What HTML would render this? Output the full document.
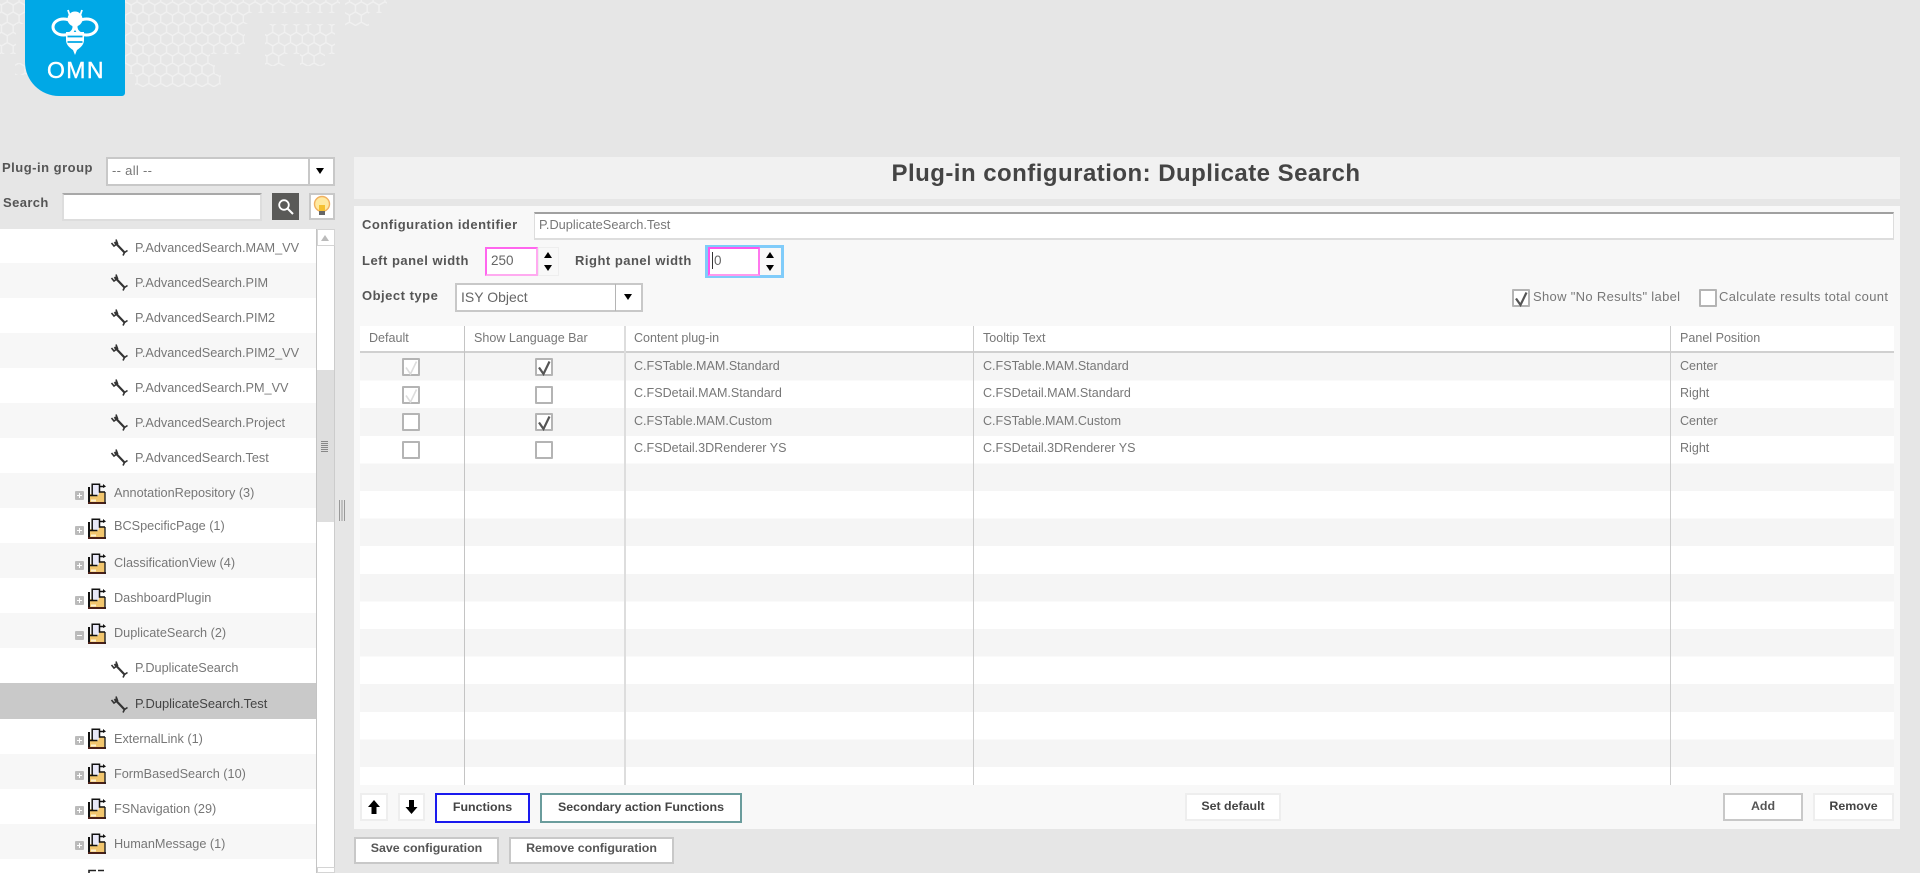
<!DOCTYPE html>
<html><head><meta charset="utf-8"><title>Plug-in configuration</title>
<style>
html,body{margin:0;padding:0;width:1920px;height:873px;overflow:hidden;background:#e6e6e6;font-family:"Liberation Sans",sans-serif;color:#777}
#r{position:absolute;left:0;top:0;width:1920px;height:873px;overflow:hidden;filter:blur(.35px)}
.a{position:absolute;box-sizing:border-box}
.t{position:absolute;white-space:nowrap;line-height:20px;font-size:12.55px;letter-spacing:0}
.t.n{font-size:12.7px}
.t.b{font-weight:bold;color:#555;font-size:13px;letter-spacing:.5px}
.btn{position:absolute;box-sizing:border-box;background:#fff;border:2px solid #eee;text-align:center;font-weight:bold;color:#444;font-size:12.4px;letter-spacing:0}
.cb{position:absolute;box-sizing:border-box;width:18px;height:18px;border:2px solid #b4b4b4;background:#fff;border-radius:1px}
svg{position:absolute;overflow:visible}
.tri{position:absolute;width:0;height:0;border-left:4.5px solid transparent;border-right:4.5px solid transparent}
.dn{border-top:6px solid #000}
.up{border-bottom:6px solid #000}
.p,.m{position:absolute;left:75px;width:9px;height:9px;border-radius:1px;background:#bbb}
.p:before,.m:before{content:"";position:absolute;left:2px;top:4px;width:5px;height:1px;background:#fff}
.p:after{content:"";position:absolute;left:4px;top:2px;width:1px;height:5px;background:#fff}
</style></head>
<body><div id="r">
<svg width="0" height="0" style="position:absolute">
<defs>
<pattern id="hx" x="1.4" y="1.7" width="11.8" height="20.4" patternUnits="userSpaceOnUse">
<path d="M0 3.4L5.9 0L11.8 3.4M0 3.4V10.2L5.9 13.6V20.4M11.8 3.4V10.2L5.9 13.6" fill="none" stroke="#f1f1f1" stroke-width="1.3"/>
</pattern>
<clipPath id="hc">
<rect x="0" y="0" width="340" height="13"/><rect x="345" y="0" width="42" height="13"/>
<rect x="0" y="13" width="250" height="11"/><rect x="345" y="13" width="24" height="13"/>
<rect x="0" y="24" width="16" height="30"/><rect x="125" y="24" width="120" height="30"/><rect x="265" y="24" width="70" height="30"/>
<rect x="125" y="54" width="85" height="10"/><rect x="265" y="54" width="20" height="12"/><rect x="300" y="54" width="25" height="12"/>
<rect x="15" y="63" width="12" height="12"/><rect x="125" y="64" width="90" height="10"/>
<rect x="135" y="74" width="86" height="13"/>
</clipPath>
<g id="w"><path d="M3.5 3L14 14" stroke="#333" stroke-width="2.2" fill="none"/><path d="M0.5 4L3 7L6.5 4.5L5 .5" stroke="#333" stroke-width="1.6" fill="none"/><path d="M16.5 11.5L13.5 13.5L12 16.5" stroke="#333" stroke-width="1.6" fill="none"/></g>
<g id="f"><path d="M2 11H6V13H10L11 9H16.5V19H2Z" fill="#f2c66e"/><path d="M4.5 1.5H11V11.5H4.5Z" fill="#e8e8f8"/><path d="M3 16.5H8V18.5H3Z" fill="#fff3d0"/><path d="M1 4V20" stroke="#111" stroke-width="2" fill="none"/><path d="M0 20H18" stroke="#4a2018" stroke-width="2" fill="none"/><path d="M17 20.5V9" stroke="#222" stroke-width="1.4" fill="none"/><path d="M4.2 12.5V1.2H11.5V9H17M11.5 3.5H15.5M2 12.5H9.5" stroke="#111" stroke-width="1.5" fill="none"/><path d="M15 1L18 3.5L15 5Z" fill="#111"/></g>
<g id="ck"><path d="M2 7.5L6.5 14L12.5 1.5" fill="none" stroke="#555" stroke-width="2.2"/></g>
<g id="ckd"><path d="M2 7.5L6.5 14L12.5 1.5" fill="none" stroke="#ddd" stroke-width="1.6"/></g>
</defs></svg>

<svg style="left:0;top:0" width="400" height="90"><rect width="400" height="90" fill="url(#hx)" clip-path="url(#hc)"/></svg>

<!-- logo -->
<div class="a" style="left:25px;top:0;width:100px;height:96px;background:#00a8e6;border-radius:0 0 3px 34px"></div>
<svg style="left:25px;top:0" width="100" height="96">
<g fill="none" stroke="#fff">
<ellipse cx="38.5" cy="27" rx="10.5" ry="8" stroke-width="3"/>
<ellipse cx="61.5" cy="27" rx="10.5" ry="8" stroke-width="3"/>
<path d="M45 16L43 10M55 16L57 10" stroke-width="1.8"/>
</g>
<circle cx="50" cy="19" r="7.5" fill="#fff"/>
<path d="M41 32H59V40C59 45 55 48 52 50L50 55L48 50C45 48 41 45 41 40Z" fill="#fff"/>
<path d="M42.5 36.5H57.5M42.5 42H57.5" stroke="#00a8e6" stroke-width="1.7"/>
</svg>
<div class="t" style="left:47px;top:59px;font-size:23px;letter-spacing:1.4px;color:#fff;line-height:22px;-webkit-text-stroke:.4px #fff">OMN</div>

<!-- left controls -->
<div class="t b" style="left:2px;top:158px">Plug-in group</div>
<div class="a" style="left:106px;top:157px;width:229px;height:29px;background:#fff;border:2px solid #c8c8c8"></div>
<div class="a" style="left:308px;top:158px;width:2px;height:27px;background:#c8c8c8"></div>
<div class="tri dn" style="left:316px;top:168px"></div>
<div class="t" style="left:112px;top:161px;font-size:13px;letter-spacing:.3px">-- all --</div>
<div class="t b" style="left:3px;top:193px;letter-spacing:.4px">Search</div>
<div class="a" style="left:62px;top:193px;width:200px;height:28px;background:#fff;border:2px solid #ddd;border-top-color:#a8a8a8"></div>
<div class="a" style="left:272px;top:193px;width:27px;height:27px;background:#5a5a58"></div>
<svg style="left:272px;top:193px" width="27" height="27"><circle cx="12" cy="12" r="4.8" fill="none" stroke="#fff" stroke-width="1.8"/><path d="M15.5 15.5L21 21" stroke="#fff" stroke-width="2"/></svg>
<div class="a" style="left:309px;top:193px;width:26px;height:27px;background:#fff;border:2px solid #c8c8c8"></div>
<svg style="left:309px;top:193px" width="26" height="27"><circle cx="13" cy="11" r="7.5" fill="#ffe9a0" stroke="#f0b060" stroke-width="1.4"/><path d="M10 12H16V19H10Z" fill="#f5c030"/><path d="M10 18H16V22H10Z" fill="#666"/></svg>

<!-- tree -->
<div class="a" style="left:0;top:229px;width:316px;height:644px;background:#fff;overflow:hidden">
<div class="a" style="left:0;top:34px;width:316px;height:35px;background:#f7f7f7"></div>
<div class="a" style="left:0;top:104px;width:316px;height:35px;background:#f7f7f7"></div>
<div class="a" style="left:0;top:174px;width:316px;height:35px;background:#f7f7f7"></div>
<div class="a" style="left:0;top:244px;width:316px;height:35px;background:#f7f7f7"></div>
<div class="a" style="left:0;top:314px;width:316px;height:35px;background:#f7f7f7"></div>
<div class="a" style="left:0;top:384px;width:316px;height:35px;background:#f7f7f7"></div>
<div class="a" style="left:0;top:454px;width:316px;height:36px;background:#c9c9c9"></div>
<div class="a" style="left:0;top:525px;width:316px;height:35px;background:#f7f7f7"></div>
<div class="a" style="left:0;top:595px;width:316px;height:35px;background:#f7f7f7"></div>
</div>

<svg style="left:111px;top:239px" width="17" height="17"><use href="#w"/></svg><div class="t n" style="left:135px;top:238px">P.AdvancedSearch.MAM_VV</div>
<svg style="left:111px;top:274px" width="17" height="17"><use href="#w"/></svg><div class="t n" style="left:135px;top:273px">P.AdvancedSearch.PIM</div>
<svg style="left:111px;top:309px" width="17" height="17"><use href="#w"/></svg><div class="t n" style="left:135px;top:308px">P.AdvancedSearch.PIM2</div>
<svg style="left:111px;top:344px" width="17" height="17"><use href="#w"/></svg><div class="t n" style="left:135px;top:343px">P.AdvancedSearch.PIM2_VV</div>
<svg style="left:111px;top:379px" width="17" height="17"><use href="#w"/></svg><div class="t n" style="left:135px;top:378px">P.AdvancedSearch.PM_VV</div>
<svg style="left:111px;top:414px" width="17" height="17"><use href="#w"/></svg><div class="t n" style="left:135px;top:413px">P.AdvancedSearch.Project</div>
<svg style="left:111px;top:449px" width="17" height="17"><use href="#w"/></svg><div class="t n" style="left:135px;top:448px">P.AdvancedSearch.Test</div>

<div class="p" style="top:491px"></div><svg style="left:88px;top:483px" width="18" height="21"><use href="#f"/></svg><div class="t n" style="left:114px;top:483px">AnnotationRepository (3)</div>
<div class="p" style="top:526px"></div><svg style="left:88px;top:518px" width="18" height="21"><use href="#f"/></svg><div class="t n" style="left:114px;top:516px">BCSpecificPage (1)</div>
<div class="p" style="top:561px"></div><svg style="left:88px;top:553px" width="18" height="21"><use href="#f"/></svg><div class="t n" style="left:114px;top:553px">ClassificationView (4)</div>
<div class="p" style="top:596px"></div><svg style="left:88px;top:588px" width="18" height="21"><use href="#f"/></svg><div class="t n" style="left:114px;top:588px">DashboardPlugin</div>
<div class="m" style="top:631px"></div><svg style="left:88px;top:623px" width="18" height="21"><use href="#f"/></svg><div class="t n" style="left:114px;top:623px">DuplicateSearch (2)</div>
<svg style="left:111px;top:661px" width="17" height="17"><use href="#w"/></svg><div class="t n" style="left:135px;top:658px">P.DuplicateSearch</div>
<svg style="left:111px;top:696px" width="17" height="17"><use href="#w"/></svg><div class="t n" style="left:135px;top:694px;color:#444;font-size:12.9px">P.DuplicateSearch.Test</div>
<div class="p" style="top:736px"></div><svg style="left:88px;top:728px" width="18" height="21"><use href="#f"/></svg><div class="t n" style="left:114px;top:729px">ExternalLink (1)</div>
<div class="p" style="top:771px"></div><svg style="left:88px;top:763px" width="18" height="21"><use href="#f"/></svg><div class="t n" style="left:114px;top:764px">FormBasedSearch (10)</div>
<div class="p" style="top:806px"></div><svg style="left:88px;top:798px" width="18" height="21"><use href="#f"/></svg><div class="t n" style="left:114px;top:799px">FSNavigation (29)</div>
<div class="p" style="top:841px"></div><svg style="left:88px;top:833px" width="18" height="21"><use href="#f"/></svg><div class="t n" style="left:114px;top:834px">HumanMessage (1)</div>
<svg style="left:88px;top:869px" width="18" height="4"><path d="M1 4V1.5H8M10 1.5H16" stroke="#222" stroke-width="1.6" fill="none"/></svg>

<!-- scrollbar -->
<div class="a" style="left:316px;top:229px;width:19px;height:644px;background:#fff;border-left:1px solid #c4c4c4;border-right:1px solid #ccc"></div>
<div class="a" style="left:317px;top:229px;width:18px;height:17px;background:#fff;border:1px solid #d4d4d4"></div>
<div class="tri" style="left:321px;top:235px;border-bottom:6px solid #bbb"></div>
<div class="a" style="left:317px;top:370px;width:17px;height:152px;background:#dedede"></div>
<div class="a" style="left:321px;top:441px;width:7px;height:11px;background:repeating-linear-gradient(#888 0 1px,#ddd 1px 2px)"></div>
<div class="a" style="left:317px;top:867px;width:18px;height:6px;background:#fff;border:1px solid #d4d4d4"></div>
<div class="a" style="left:339px;top:500px;width:6px;height:21px;background:repeating-linear-gradient(90deg,#999 0 1px,#e6e6e6 1px 2.5px)"></div>

<!-- title -->
<div class="a" style="left:354px;top:157px;width:1546px;height:42px;background:#f1f1f1"></div>
<div class="t" style="left:353px;width:1546px;top:163px;text-align:center;font-weight:bold;font-size:24px;letter-spacing:.47px;color:#444;line-height:22px">Plug-in configuration: Duplicate Search</div>

<!-- config panel -->
<div class="a" style="left:354px;top:206px;width:1546px;height:623px;background:#f8f8f8"></div>
<div class="t b" style="left:362px;top:215px">Configuration identifier</div>
<div class="a" style="left:534px;top:212px;width:1360px;height:28px;background:#fff;border:1px solid #ddd;border-top:2px solid #a0a0a0;border-bottom-width:2px"></div>
<div class="t" style="left:539px;top:215px;font-size:12.8px">P.DuplicateSearch.Test</div>

<div class="t b" style="left:362px;top:251px">Left panel width</div>
<div class="a" style="left:485px;top:247px;width:53px;height:29px;background:#fff;border:2px solid #ff66ee;border-right-color:#ffaaf0;border-bottom-color:#ffaaf0"></div>
<div class="t" style="left:491px;top:251px;font-size:13.5px;color:#666">250</div>
<div class="a" style="left:538px;top:247px;width:21px;height:29px;background:#f8f8f8;border:1px solid #eee"></div>
<div class="tri up" style="left:544px;top:252px"></div><div class="tri dn" style="left:544px;top:265px"></div>

<div class="t b" style="left:575px;top:251px">Right panel width</div>
<div class="a" style="left:705px;top:245px;width:79px;height:33px;border:3px solid #80ccfa;background:#f8f8f8"></div>
<div class="a" style="left:708px;top:247px;width:52px;height:29px;background:#fff;border:2px solid #ff55ee;border-right-color:#ff77ee;border-bottom-color:#ff99ee"></div>
<div class="a" style="left:712px;top:252px;width:1px;height:17px;background:#333"></div>
<div class="t" style="left:714px;top:251px;font-size:13.5px;color:#666">0</div>
<div class="tri up" style="left:766px;top:252px"></div><div class="tri dn" style="left:766px;top:265px"></div>

<div class="t b" style="left:362px;top:286px">Object type</div>
<div class="a" style="left:455px;top:283px;width:188px;height:29px;background:#fff;border:2px solid #c8c8c8"></div>
<div class="a" style="left:615px;top:284px;width:1px;height:27px;background:#b4b4b4"></div>
<div class="tri dn" style="left:624px;top:294px"></div>
<div class="t" style="left:461px;top:287px;font-size:14px;color:#666">ISY Object</div>

<div class="cb" style="left:1512px;top:289px"></div><svg style="left:1514px;top:291px" width="14" height="14"><use href="#ck"/></svg>
<div class="t" style="left:1533px;top:287px;font-size:13px;letter-spacing:.32px">Show "No Results" label</div>
<div class="cb" style="left:1699px;top:289px"></div>
<div class="t" style="left:1719px;top:287px;font-size:13px;letter-spacing:.33px">Calculate results total count</div>

<!-- table -->
<div class="a" style="left:360px;top:326px;width:1534px;height:27px;background:#fff;border-bottom:2px solid #d0d0d0"></div>
<div class="a" style="left:360px;top:353px;width:1534px;height:432px;background:repeating-linear-gradient(#f5f5f5 0 27.6px,#fff 27.6px 55.2px)"></div>
<div class="a" style="left:464px;top:326px;width:1px;height:459px;background:#c4c4c4"></div>
<div class="a" style="left:624px;top:326px;width:2px;height:459px;background:#ddd"></div>
<div class="a" style="left:973px;top:326px;width:1px;height:459px;background:#ccc"></div>
<div class="a" style="left:1670px;top:326px;width:1px;height:459px;background:#ccc"></div>
<div class="t" style="left:369px;top:328px">Default</div>
<div class="t" style="left:474px;top:328px">Show Language Bar</div>
<div class="t" style="left:634px;top:328px">Content plug-in</div>
<div class="t" style="left:983px;top:328px">Tooltip Text</div>
<div class="t" style="left:1680px;top:328px">Panel Position</div>

<div class="cb" style="left:402px;top:358px"></div><svg style="left:404px;top:360px" width="14" height="14"><use href="#ckd"/></svg>
<div class="cb" style="left:535px;top:358px"></div><svg style="left:537px;top:360px" width="14" height="14"><use href="#ck"/></svg>
<div class="t" style="left:634px;top:356px">C.FSTable.MAM.Standard</div><div class="t" style="left:983px;top:356px">C.FSTable.MAM.Standard</div><div class="t" style="left:1680px;top:356px">Center</div>

<div class="cb" style="left:402px;top:386px"></div><svg style="left:404px;top:388px" width="14" height="14"><use href="#ckd"/></svg>
<div class="cb" style="left:535px;top:386px"></div>
<div class="t" style="left:634px;top:383px">C.FSDetail.MAM.Standard</div><div class="t" style="left:983px;top:383px">C.FSDetail.MAM.Standard</div><div class="t" style="left:1680px;top:383px">Right</div>

<div class="cb" style="left:402px;top:413px"></div>
<div class="cb" style="left:535px;top:413px"></div><svg style="left:537px;top:415px" width="14" height="14"><use href="#ck"/></svg>
<div class="t" style="left:634px;top:411px">C.FSTable.MAM.Custom</div><div class="t" style="left:983px;top:411px">C.FSTable.MAM.Custom</div><div class="t" style="left:1680px;top:411px">Center</div>

<div class="cb" style="left:402px;top:441px"></div>
<div class="cb" style="left:535px;top:441px"></div>
<div class="t" style="left:634px;top:438px">C.FSDetail.3DRenderer YS</div><div class="t" style="left:983px;top:438px">C.FSDetail.3DRenderer YS</div><div class="t" style="left:1680px;top:438px">Right</div>

<!-- bottom buttons -->
<div class="btn" style="left:360px;top:793px;width:28px;height:28px"></div>
<svg style="left:360px;top:793px" width="28" height="28"><path d="M14 7L20 14H16.5V21H11.5V14H8Z" fill="#000"/></svg>
<div class="btn" style="left:398px;top:793px;width:27px;height:28px"></div>
<svg style="left:398px;top:793px" width="27" height="28"><path d="M13.5 21L7.5 14H11V7H16V14H19.5Z" fill="#000"/></svg>
<div class="btn" style="left:435px;top:793px;width:95px;height:30px;border-color:#1a1aee;line-height:24px">Functions</div>
<div class="btn" style="left:540px;top:793px;width:202px;height:30px;border-color:#6a9c9c;line-height:24px">Secondary action Functions</div>
<div class="btn" style="left:1185px;top:793px;width:96px;height:28px;line-height:22px">Set default</div>
<div class="btn" style="left:1723px;top:793px;width:80px;height:28px;line-height:22px;border-color:#c8c8c8;color:#555">Add</div>
<div class="btn" style="left:1813px;top:793px;width:81px;height:28px;line-height:22px">Remove</div>
<div class="btn" style="left:354px;top:837px;width:145px;height:27px;border-color:#c8c8c8;line-height:19px;color:#555">Save configuration</div>
<div class="btn" style="left:509px;top:837px;width:165px;height:27px;border-color:#c8c8c8;line-height:19px;color:#555">Remove configuration</div>
</div></body></html>
